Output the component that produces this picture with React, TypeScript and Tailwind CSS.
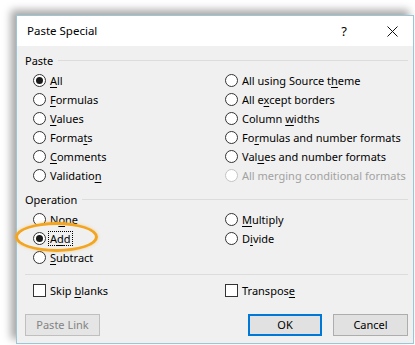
import React from "react";

type Opt = { label: string; u: number; checked?: boolean; disabled?: boolean; focus?: boolean };

const Label = ({ text, idx }: { text: string; idx: number }) =>
  idx < 0 ? (
    <>{text}</>
  ) : (
    <>
      {text.slice(0, idx)}
      <span className="underline underline-offset-[2px]">{text[idx]}</span>
      {text.slice(idx + 1)}
    </>
  );

const Radio = ({ label, u, checked, disabled, focus }: Opt) => (
  <div className="flex h-[19px] items-center">
    <span
      className={`flex h-[13px] w-[13px] shrink-0 items-center justify-center rounded-full border bg-white ${
        disabled ? "border-[#c4c4c4]" : "border-[#333333]"
      }`}
    >
      {checked && <span className="h-[7px] w-[7px] rounded-full bg-[#1a1a1a]" />}
    </span>
    <span
      className={`ml-[4px] whitespace-nowrap leading-none ${disabled ? "text-[#a2a2a2]" : "text-black"} ${
        focus ? "outline-1 outline-offset-1 outline-dotted outline-black" : ""
      }`}
    >
      <Label text={label} idx={u} />
    </span>
  </div>
);

const Check = ({ label, u }: { label: string; u: number }) => (
  <div className="flex h-[19px] items-center">
    <span className="h-[13px] w-[13px] shrink-0 border border-[#333333] bg-white" />
    <span className="ml-[4px] whitespace-nowrap leading-none">
      <Label text={label} idx={u} />
    </span>
  </div>
);

const Section = ({ title }: { title: string }) => (
  <div className="flex h-[18px] items-center">
    <span className="leading-none">{title}</span>
    <span className="ml-[5px] h-px flex-1 bg-[#dcdcdc]" />
  </div>
);

const pasteLeft: Opt[] = [
  { label: "All", u: 0, checked: true },
  { label: "Formulas", u: 0 },
  { label: "Values", u: 0 },
  { label: "Formats", u: 5 },
  { label: "Comments", u: 0 },
  { label: "Validation", u: 9 },
];

const pasteRight: Opt[] = [
  { label: "All using Source theme", u: 18 },
  { label: "All except borders", u: 5 },
  { label: "Column widths", u: 7 },
  { label: "Formulas and number formats", u: 2 },
  { label: "Values and number formats", u: 3 },
  { label: "All merging conditional formats", u: -1, disabled: true },
];

const opLeft: Opt[] = [
  { label: "None", u: 1 },
  { label: "Add", u: 1, checked: true, focus: true },
  { label: "Subtract", u: 0 },
];

const opRight: Opt[] = [
  { label: "Multiply", u: 0 },
  { label: "Divide", u: 1 },
];

const Columns = ({ left, right }: { left: Opt[]; right: Opt[] }) => (
  <div className="mt-[2px] flex pl-[8px]">
    <div className="flex w-[192px] shrink-0 flex-col">
      {left.map((o) => (
        <Radio key={o.label} {...o} />
      ))}
    </div>
    <div className="flex flex-col">
      {right.map((o) => (
        <Radio key={o.label} {...o} />
      ))}
    </div>
  </div>
);

export default function App() {
  return (
    <div className="relative h-[345px] w-[415px] overflow-hidden bg-white font-['Noto_Sans',sans-serif] text-[11px] text-black">
      <div className="ml-[16px] mt-[15px] flex w-[398px] flex-col border border-[#9cc6d6] bg-[#f0f0f0] shadow-[-5px_-5px_8px_rgba(0,0,0,0.35)]">
        <div className="flex h-[30px] items-center bg-white pl-[10px]">
          <span className="text-[11.5px]">Paste Special</span>
          <span className="ml-auto mr-[40px] text-[13px] leading-none">?</span>
          <svg width="11" height="11" viewBox="0 0 11 11" className="mr-[15px]">
            <path d="M0.5 0.5L10.5 10.5M10.5 0.5L0.5 10.5" stroke="#111" strokeWidth="1" />
          </svg>
        </div>

        <div className="flex flex-col pb-[7px] pl-[8px] pr-[5px] pt-[5px]">
          <Section title="Paste" />
          <Columns left={pasteLeft} right={pasteRight} />

          <div className="mt-[5px]">
            <Section title="Operation" />
          </div>
          <Columns left={opLeft} right={opRight} />

          <div className="mt-[7px] h-px bg-[#dcdcdc]" />

          <div className="mt-[6px] flex pl-[8px]">
            <div className="w-[192px] shrink-0">
              <Check label="Skip blanks" u={5} />
            </div>
            <Check label="Transpose" u={8} />
          </div>

          <div className="mt-[14px] flex items-center">
            <button className="h-[22px] w-[75px] border border-[#bfbfbf] bg-[#e5e5e5] text-[11px] text-[#838383]">
              Paste Link
            </button>
            <button className="ml-auto h-[22px] w-[74px] border-2 border-[#0078d7] bg-[#e1e1e1] text-[11px]">
              OK
            </button>
            <button className="ml-[11px] h-[22px] w-[75px] border border-[#adadad] bg-[#e1e1e1] text-[11px]">
              Cancel
            </button>
          </div>
        </div>
      </div>

      <div className="pointer-events-none absolute left-[15px] top-[222px] h-[30px] w-[83px] rounded-[50%] border-[3px] border-[#f3a51f] shadow-[0_0_3px_rgba(243,165,31,0.5)]" />
    </div>
  );
}
